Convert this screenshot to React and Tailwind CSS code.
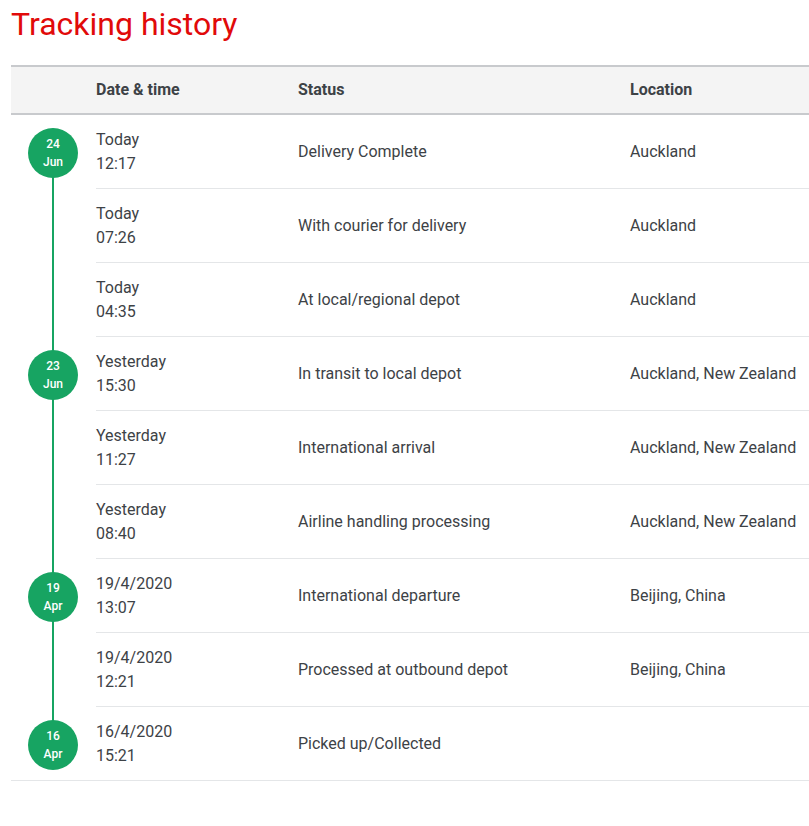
const rows = [
  { badge: ["24", "Jun"], d: "Today", t: "12:17", s: "Delivery Complete", l: "Auckland" },
  { d: "Today", t: "07:26", s: "With courier for delivery", l: "Auckland" },
  { d: "Today", t: "04:35", s: "At local/regional depot", l: "Auckland" },
  { badge: ["23", "Jun"], d: "Yesterday", t: "15:30", s: "In transit to local depot", l: "Auckland, New Zealand" },
  { d: "Yesterday", t: "11:27", s: "International arrival", l: "Auckland, New Zealand" },
  { d: "Yesterday", t: "08:40", s: "Airline handling processing", l: "Auckland, New Zealand" },
  { badge: ["19", "Apr"], d: "19/4/2020", t: "13:07", s: "International departure", l: "Beijing, China" },
  { d: "19/4/2020", t: "12:21", s: "Processed at outbound depot", l: "Beijing, China" },
  { badge: ["16", "Apr"], d: "16/4/2020", t: "15:21", s: "Picked up/Collected", l: "" },
];

export default function App() {
  const last = rows.length - 1;
  return (
    <div className="bg-white min-h-[826px] overflow-hidden text-[#3d4246]" style={{ fontFamily: "Roboto, 'Liberation Sans', sans-serif" }}>
      <h1 className="text-[32px] leading-[48px] text-[#e10a0a] pl-[11px] pt-0">Tracking history</h1>
      <div className="ml-[11px] mt-[17px] w-[860px]">
        <div className="flex h-[50px] items-center bg-[#f4f4f4] border-t-2 border-b-2 border-[#c8cacd] font-bold text-[16px]">
          <div className="w-[85px]" />
          <div className="w-[202px]">Date &amp; time</div>
          <div className="w-[332px]">Status</div>
          <div>Location</div>
        </div>
        {rows.map((r, i) => (
          <div key={i} className={"flex h-[74px] " + (i === last ? "border-b border-[#e4e6e8]" : "")}>
            <div className="w-[85px] relative shrink-0">
              {i > 0 && (
                <div className={"absolute left-[41px] w-[2px] bg-[#17a462] top-0 " + (i === last ? "h-[38px]" : "h-full")} />
              )}
              {i === 0 && <div className="absolute left-[41px] w-[2px] bg-[#17a462] top-[38px] bottom-0" />}
              {r.badge && (
                <div className="absolute left-[17px] top-[13px] w-[50px] h-[50px] rounded-full bg-[#17a462] text-white text-[12px] leading-[18px] font-medium flex flex-col items-center justify-center">
                  <span>{r.badge[0]}</span>
                  <span>{r.badge[1]}</span>
                </div>
              )}
            </div>
            <div className={"flex flex-1 items-center text-[16px] " + (i === last ? "" : "border-b border-[#e4e6e8]")}>
              <div className="w-[202px] leading-[24px]">
                <div>{r.d}</div>
                <div>{r.t}</div>
              </div>
              <div className="w-[332px]">{r.s}</div>
              <div>{r.l}</div>
            </div>
          </div>
        ))}
      </div>
    </div>
  );
}
